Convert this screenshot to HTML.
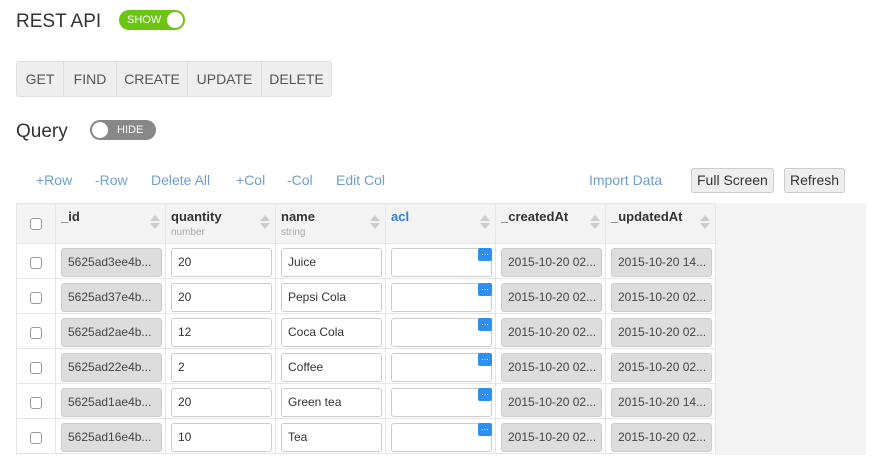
<!DOCTYPE html>
<html><head><style>
*{box-sizing:border-box;margin:0;padding:0}
body{width:877px;height:469px;background:#fff;font-family:"Liberation Sans",sans-serif;color:#333;position:relative;overflow:hidden}
.a{position:absolute}
.t{font-size:19px;color:#333}
.tog{position:absolute;height:20px;border-radius:10px;font-size:11px;color:#fff;line-height:20px}
.knob{position:absolute;top:2px;width:16px;height:16px;border-radius:8px;background:#fff}
.btns{position:absolute;left:16px;top:61px;height:36px;border:1px solid #ddd;border-radius:3px;background:#eee;display:flex}
.btns div{text-align:center;line-height:34px;font-size:14px;color:#555;border-right:1px solid #ddd}
.btns div:last-child{border-right:none}
.lk{position:absolute;top:172px;font-size:14px;color:#6e9fd0}
.bt{position:absolute;top:168px;height:25px;border:1px solid #ccc;border-radius:3px;background:#eee;font-size:14px;line-height:23px;padding:0 5px;color:#333}
.cell{position:absolute;border-right:1px solid #e6e6e6;border-bottom:1px solid #e6e6e6}
.hd{font-size:13px;font-weight:bold;color:#333;padding:6px 5px}
.sub{font-size:10px;color:#aaa;font-weight:normal;display:block;margin-top:3px}
.sort{position:absolute;right:5px;top:12px;width:10px}
.sort:before{content:"";position:absolute;border:5px solid transparent;border-bottom:6px solid #ccc;border-top:none;top:0;left:0}
.sort:after{content:"";position:absolute;border:5px solid transparent;border-top:6px solid #ccc;border-bottom:none;top:8px;left:0}
.cb{position:absolute;left:14px;width:12px;height:12px;border:1px solid #999;border-radius:3px;background:#fff}
.in{position:absolute;height:29px;border:1px solid #ccc;border-radius:3px;font-size:12px;line-height:27px;padding-left:6px;white-space:nowrap;overflow:hidden;background:#fff}
.ro{background:#ddd;border-color:#ccc;color:#444}
.dot{position:absolute;width:14px;height:13px;background:#2f8ff0;border-radius:2px;color:#fff;font-size:9px;line-height:8px;text-align:center}
</style></head><body>
<div class="a t" style="left:16px;top:11px">REST API</div>
<div class="tog" style="left:119px;top:10px;width:66px;background:#6bc612;padding-left:8px">SHOW<div class="knob" style="right:2px"></div></div>
<div class="btns"><div style="width:47px">GET</div><div style="width:53px">FIND</div><div style="width:71px">CREATE</div><div style="width:74px">UPDATE</div><div style="width:69px">DELETE</div></div>
<div class="a t" style="left:16px;top:121px">Query</div>
<div class="tog" style="left:90px;top:120px;width:66px;background:#888;padding-left:27px">HIDE<div class="knob" style="left:2px"></div></div>
<div class="lk" style="left:36px">+Row</div>
<div class="lk" style="left:95px">-Row</div>
<div class="lk" style="left:151px">Delete All</div>
<div class="lk" style="left:236px">+Col</div>
<div class="lk" style="left:287px">-Col</div>
<div class="lk" style="left:336px">Edit Col</div>
<div class="lk" style="left:589px">Import Data</div>
<div class="bt" style="left:691px">Full Screen</div>
<div class="bt" style="left:784px">Refresh</div>
<div class="a" style="left:16px;top:203px;width:850px;height:252px;background:#f3f3f3"></div>
<div class="a" style="left:16px;top:244px;width:700px;height:211px;background:#fff;border-left:1px solid #e6e6e6"></div>
<div class="a" style="left:16px;top:203px;width:700px;height:41px;background:#f3f3f3;border:1px solid #e6e6e6;border-right:none"></div>
<div class="cell" style="left:16px;top:203px;width:40px;height:41px"><div class="cb" style="top:15px;left:14px"></div></div>
<div class="cell hd" style="left:56px;top:203px;width:110px;height:41px">_id<span class="sort"></span></div>
<div class="cell hd" style="left:166px;top:203px;width:110px;height:41px">quantity<span class="sub">number</span><span class="sort"></span></div>
<div class="cell hd" style="left:276px;top:203px;width:110px;height:41px">name<span class="sub">string</span><span class="sort"></span></div>
<div class="cell hd" style="left:386px;top:203px;width:110px;height:41px;color:#2f7fd8">acl<span class="sort"></span></div>
<div class="cell hd" style="left:496px;top:203px;width:110px;height:41px">_createdAt<span class="sort"></span></div>
<div class="cell hd" style="left:606px;top:203px;width:110px;height:41px">_updatedAt<span class="sort"></span></div>
<div id="rows"></div>
<script>
var d=[["5625ad3ee4b...","20","Juice","2015-10-20 02...","2015-10-20 14..."],["5625ad37e4b...","20","Pepsi Cola","2015-10-20 02...","2015-10-20 02..."],["5625ad2ae4b...","12","Coca Cola","2015-10-20 02...","2015-10-20 02..."],["5625ad22e4b...","2","Coffee","2015-10-20 02...","2015-10-20 02..."],["5625ad1ae4b...","20","Green tea","2015-10-20 02...","2015-10-20 14..."],["5625ad16e4b...","10","Tea","2015-10-20 02...","2015-10-20 02..."]];
var h="";d.forEach(function(r,i){var y=244+i*35;
[16,56,166,276,386,496,606].forEach(function(x,j){h+='<div class="cell" style="left:'+x+'px;top:'+y+'px;width:'+(j?110:40)+'px;height:35px"></div>';});
h+='<div class="cb" style="left:30px;top:'+(y+13)+'px"></div>';
h+='<div class="in ro" style="left:61px;top:'+(y+4)+'px;width:101px">'+r[0]+'</div>';
h+='<div class="in" style="left:171px;top:'+(y+4)+'px;width:101px">'+r[1]+'</div>';
h+='<div class="in" style="left:281px;top:'+(y+4)+'px;width:101px">'+r[2]+'</div>';
h+='<div class="in" style="left:391px;top:'+(y+4)+'px;width:101px"></div>';
h+='<div class="dot" style="left:478px;top:'+(y+4)+'px">...</div>';
h+='<div class="in ro" style="left:501px;top:'+(y+4)+'px;width:101px">'+r[3]+'</div>';
h+='<div class="in ro" style="left:611px;top:'+(y+4)+'px;width:101px">'+r[4]+'</div>';});
document.getElementById("rows").innerHTML=h;
</script>
</body></html>
